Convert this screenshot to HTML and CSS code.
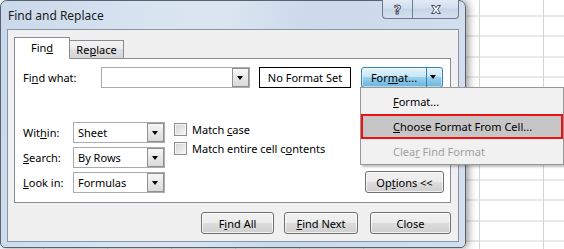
FILE: index.html
```html
<!DOCTYPE html>
<html lang="en">
<head>
  <meta charset="UTF-8" />
  <title>Find and Replace</title>
  <link rel="stylesheet" href="styles.css">
</head>
<body>
  <div class="dialog">
    <div class="titlebar">
      <span class="title">Find and Replace</span>
      <div class="caption">
        <span class="cap help">?</span>
        <span class="cap close">
          <svg width="12" height="11" viewBox="0 0 12 11">
            <path d="M1.5,1.5 H4.5 L6,3.6 L7.5,1.5 H10.5 L7.7,5.5 L10.5,9.5 H7.5 L6,7.4 L4.5,9.5 H1.5 L4.3,5.5 Z" fill="#f4f7fb" stroke="#3f4a59" stroke-width="1" stroke-linejoin="round"/>
          </svg>
        </span>
      </div>
    </div>

    <div class="client">
      <div class="tabs">
        <span class="tab active">Fin<u>d</u></span>
        <span class="tab replace">Re<u>p</u>lace</span>
      </div>

      <div class="panel">
        <div class="find-row">
          <span class="lbl find-lbl">Fi<u>n</u>d what:</span>
          <div class="combo wide"><span class="val"></span><span class="arrow"></span></div>
          <div class="noformat">No Format Set</div>
          <div class="split-btn">
            <span class="split-main">For<u>m</u>at...</span>
            <span class="split-drop"><i class="tri"></i></span>
          </div>
        </div>

        <div class="options">
          <div class="selects">
            <div class="sel-row">
              <span class="lbl">Wit<u>h</u>in:</span>
              <div class="combo"><span class="val">Sheet</span><span class="arrow"></span></div>
            </div>
            <div class="sel-row">
              <span class="lbl"><u>S</u>earch:</span>
              <div class="combo"><span class="val">By Rows</span><span class="arrow"></span></div>
            </div>
            <div class="sel-row">
              <span class="lbl"><u>L</u>ook in:</span>
              <div class="combo"><span class="val">Formulas</span><span class="arrow"></span></div>
            </div>
          </div>

          <div class="checks">
            <div class="check-row"><span class="box"></span><span>Match <u>c</u>ase</span></div>
            <div class="check-row"><span class="box"></span><span>Match entire cell c<u>o</u>ntents</span></div>
          </div>

          <div class="btn options-btn">Op<u>t</u>ions &lt;&lt;</div>
        </div>
      </div>

      <div class="actions">
        <div class="btn find-all">F<u>i</u>nd All</div>
        <div class="btn find-next"><u>F</u>ind Next</div>
        <div class="btn close-btn">Close</div>
      </div>
    </div>
  </div>

  <div class="menu">
    <div class="menu-item"><span><u>F</u>ormat...</span></div>
    <div class="menu-item hl"><span><u>C</u>hoose Format From Cell...</span></div>
    <div class="menu-item disabled"><span>Clea<u>r</u> Find Format</span></div>
  </div>
</body>
</html>
```

FILE: styles.css
```css
* {
  margin: 0;
  padding: 0;
  box-sizing: border-box;
}

html, body {
  width: 564px;
  height: 249px;
  overflow: hidden;
}

body {
  position: relative;
  font-family: "Noto Sans", "Open Sans", sans-serif;
  font-size: 11px;
  color: #000;
  background-color: #fff;
  /* excel sheet grid behind the dialog */
  background-image:
    repeating-linear-gradient(to right, transparent 0 63px, #d4d4d4 63px 64px),
    repeating-linear-gradient(to bottom, transparent 0 19.5px, #d4d4d4 19.5px 20.5px);
  background-position: 416px 0, 0 -4.5px;
}

u {
  text-underline-offset: 1px;
}

/* window frame */
.dialog {
  position: absolute;
  left: 0;
  top: 0;
  width: 466px;
  height: 248px;
  border: 1px solid #59636f;
  border-radius: 7px 7px 5px 5px;
  background: linear-gradient(100deg, #c9d8ea 0%, #d9e4f1 30%, #dbe5f1 45%, #cbd9ea 62%, #d3dfed 100%);
  box-shadow: 2px 0 9px rgba(0, 0, 0, 0.45);
  display: flex;
  flex-direction: column;
}

.titlebar {
  height: 28px;
  display: flex;
  justify-content: space-between;
  padding: 0 6px 0 7px;
}

.title {
  align-self: center;
  font-size: 12px;
  color: #1b1b1b;
}

.caption {
  display: flex;
  height: 19px;
  margin-top: -1px;
}

.cap {
  display: flex;
  align-items: center;
  justify-content: center;
  border: 1px solid #6e7c8f;
  border-top: none;
  background: linear-gradient(#e2eaf4, #d3dfed 45%, #c5d5e8 50%, #d4e0ee);
}

.cap.help {
  width: 30px;
  border-right: none;
  border-radius: 0 0 0 4px;
  font-family: "DejaVu Sans", sans-serif;
  font-weight: bold;
  font-size: 13px;
  color: #f4f7fb;
  -webkit-text-stroke: 0.9px #3f4a59;
}

.cap.close {
  width: 47px;
  border-radius: 0 0 4px 0;
}

/* client area */
.client {
  margin: 0 6px;
  height: 213px;
  border: 1px solid #8795a8;
  background: #f0f0f0;
  padding: 7px 7px 0 6px;
  display: flex;
  flex-direction: column;
}

.tabs {
  display: flex;
  align-items: flex-end;
  height: 21px;
}

.tab {
  display: flex;
  align-items: center;
  justify-content: center;
  height: 18px;
  border: 1px solid #898c95;
  border-bottom: none;
  background: linear-gradient(#f3f3f3, #ebebeb 50%, #e0e0e0 50%, #d6d6d6);
}

.tab.active {
  width: 56px;
  height: 22px;
  margin-bottom: -1px;
  padding-bottom: 2px;
  background: #fff;
  position: relative;
  z-index: 1;
}

.tab.replace {
  width: 55px;
  margin-left: -1px;
}

.panel {
  height: 145px;
  border: 1px solid #898c95;
  background: #fff;
  padding: 8px 6px 0 8px;
}

.find-row {
  display: flex;
  align-items: center;
  height: 21px;
}

.lbl {
  width: 50px;
  flex-shrink: 0;
}

.find-lbl {
  width: 78px;
}

.combo {
  display: flex;
  align-items: center;
  width: 92px;
  height: 21px;
  border: 1px solid #a9abb0;
  background: #fff;
  padding-left: 4px;
}

.combo.wide {
  width: 149px;
}

.combo .val {
  flex: 1;
  white-space: nowrap;
}

.combo .arrow {
  width: 17px;
  height: 19px;
  border: 1px solid #909090;
  background: linear-gradient(#f7f7f7, #e8e8e8 50%, #dadada);
  position: relative;
}

.combo .arrow::after,
.tri {
  content: "";
  position: absolute;
  left: 4px;
  top: 7px;
  border-left: 3.5px solid transparent;
  border-right: 3.5px solid transparent;
  border-top: 4px solid #000;
}

.noformat {
  margin-left: 9px;
  width: 92px;
  height: 21px;
  border: 1px solid #000;
  display: flex;
  align-items: center;
  justify-content: center;
}

.split-btn {
  margin-left: 10px;
  width: 82px;
  height: 21px;
  display: flex;
  border: 1px solid #3c7fb1;
  border-radius: 3px;
  background: linear-gradient(#e5f4fc, #c4e5f6 50%, #98d1ef 50%, #68b3db);
  box-shadow: inset 0 0 0 1px rgba(255, 255, 255, 0.5);
}

.split-main {
  flex: 1;
  display: flex;
  align-items: center;
  justify-content: center;
  border-right: 1px solid #3c7fb1;
}

.split-drop {
  width: 15px;
  position: relative;
}

.split-drop .tri {
  left: 3px;
}

/* within / search / look in, checkboxes */
.options {
  margin-top: 34px;
  display: flex;
}

.selects {
  display: flex;
  flex-direction: column;
  gap: 4px;
}

.sel-row {
  display: flex;
  align-items: center;
}

.checks {
  margin-left: 9px;
  display: flex;
  flex-direction: column;
  gap: 4px;
}

.check-row {
  display: flex;
  align-items: center;
  height: 15px;
}

.box {
  width: 13px;
  height: 13px;
  margin-right: 5px;
  border: 1px solid #8e8f8f;
  background: linear-gradient(135deg, #d0d3d8, #f7f7f7);
  box-shadow: inset 0 0 0 1px #f4f4f4;
}

.btn {
  display: flex;
  align-items: center;
  justify-content: center;
  height: 22px;
  border: 1px solid #707070;
  border-radius: 3px;
  background: linear-gradient(#f2f2f2, #ebebeb 50%, #dddddd 50%, #cfcfcf);
  box-shadow: inset 0 0 0 1px rgba(255, 255, 255, 0.7);
}

.options-btn {
  margin-left: auto;
  align-self: flex-end;
  width: 79px;
}

.actions {
  margin-top: 9px;
  display: flex;
  justify-content: flex-end;
}

.find-all {
  width: 73px;
}

.find-next {
  width: 74px;
  margin-left: 10px;
}

.close-btn {
  width: 81px;
  margin-left: 12px;
}

/* dropdown menu of the Format button */
.menu {
  position: absolute;
  left: 360px;
  top: 87px;
  width: 204px;
  height: 78px;
  border: 1px solid #979797;
  background: #f1f1f1;
  box-shadow: 2px 2px 2px rgba(0, 0, 0, 0.25);
  padding-top: 1px;
  display: flex;
  flex-direction: column;
}

.menu-item {
  height: 25px;
  display: flex;
  align-items: center;
  padding-left: 32px;
}

.menu-item.hl {
  height: 26px;
  border: 2px solid #ee1111;
  background: #c6c6c6;
  padding-left: 30px;
}

.menu-item.disabled {
  color: #a0a0a0;
}
```
